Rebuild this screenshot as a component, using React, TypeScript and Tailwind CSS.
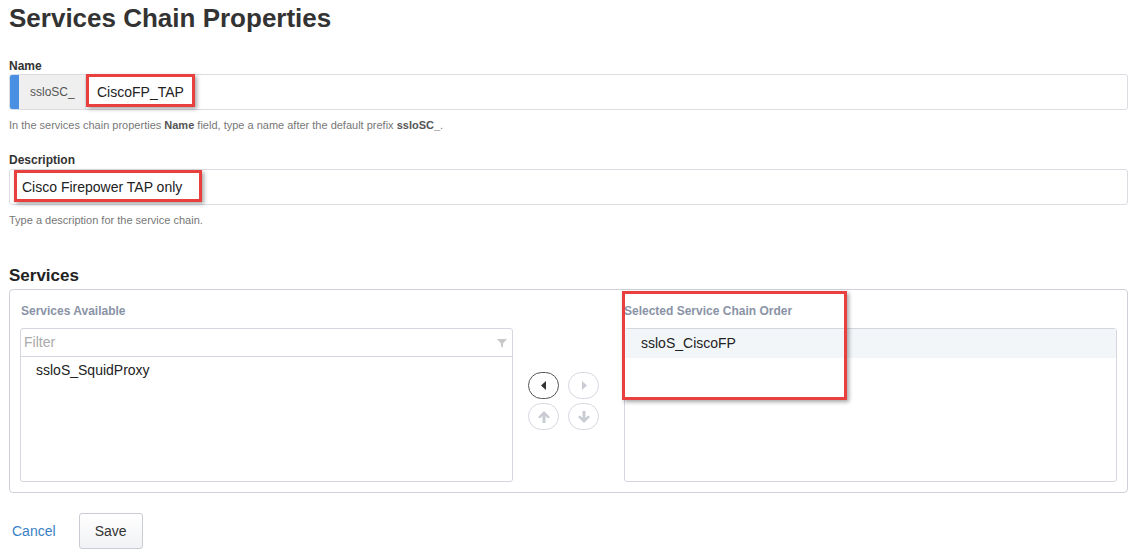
import React from 'react';

function CircleBtn({ active, children }: { active?: boolean; children: React.ReactNode }) {
  return (
    <button
      className={
        active
          ? 'w-[31px] h-[27px] rounded-full border border-[#555] flex items-center justify-center bg-white'
          : 'w-[31px] h-[27px] rounded-full border border-[#d4d7de] flex items-center justify-center bg-white'
      }
    >
      {children}
    </button>
  );
}

export default function App() {
  return (
    <div className="relative w-[1146px] h-[557px] bg-white text-[#333] font-['Liberation_Sans',Arial,sans-serif] px-[9px] pt-[3px]">
      <h1 className="text-[26px] font-bold leading-[30px] text-[#333]">Services Chain Properties</h1>

      <div className="mt-[26px] pr-[9px]">
        <label className="block text-[12px] font-bold leading-[14px] text-[#333]">Name</label>
        <div className="mt-[1px] flex h-[36px] border border-[#dcdde3] rounded-[3px] overflow-hidden">
          <div className="w-[9px] bg-[#4a90e2]" />
          <div className="w-[67px] bg-[#efefef] border-r border-[#dcdde3] flex items-center pl-[11px] text-[12px] text-[#555]">ssloSC_</div>
          <div className="flex-1 flex items-center pl-[11px] text-[14px] text-[#222]">CiscoFP_TAP</div>
        </div>
        <p className="mt-[9px] text-[11px] leading-[12px] text-[#777]">
          In the services chain properties <b className="text-[#555]">Name</b> field, type a name after the default prefix <b className="text-[#555]">ssloSC_</b>.
        </p>

        <label className="mt-[22px] block text-[12px] font-bold leading-[14px] text-[#333]">Description</label>
        <div className="mt-[2px] flex h-[36px] border border-[#dcdde3] rounded-[3px] items-center pl-[12px] text-[14px] text-[#222]">
          Cisco Firepower TAP only
        </div>
        <p className="mt-[9px] text-[11px] leading-[12px] text-[#777]">Type a description for the service chain.</p>

        <h2 className="mt-[40px] text-[17px] font-bold leading-[20px] text-[#222]">Services</h2>
        <div className="mt-[3px] h-[204px] border border-[#cfd1d8] rounded-[4px] px-[10px] pt-[14px] flex">
          <div className="w-[493px] flex flex-col">
            <div className="text-[12px] font-bold leading-[14px] text-[#8a93a6] pl-[1px]">Services Available</div>
            <div className="mt-[10px] h-[154px] border border-[#d4d7de] rounded-[3px] flex flex-col">
              <div className="h-[28px] border-b border-[#d4d7de] flex items-center justify-between px-[3px]">
                <span className="text-[14px] text-[#aaa]">Filter</span>
                <svg width="10" height="10" viewBox="0 0 10 10" className="mr-[2px]">
                  <path d="M0 1 H10 L6 5.5 V9.5 L4 8.5 V5.5 Z" fill="#c8c8c8" />
                </svg>
              </div>
              <div className="h-[26px] flex items-center pl-[15px] text-[14px] text-[#222]">ssloS_SquidProxy</div>
            </div>
          </div>

          <div className="w-[111px] flex flex-col pt-[68px] pl-[15px]">
            <div className="grid grid-cols-[31px_31px] gap-x-[9px] gap-y-[4px]">
              <CircleBtn active>
                <svg width="6" height="9" viewBox="0 0 6 9"><path d="M5 0 L0 4.5 L5 9 Z" fill="#333" /></svg>
              </CircleBtn>
              <CircleBtn>
                <svg width="6" height="9" viewBox="0 0 6 9"><path d="M1 0 L6 4.5 L1 9 Z" fill="#c9ccd3" /></svg>
              </CircleBtn>
              <CircleBtn>
                <svg width="14" height="14" viewBox="0 0 14 14"><path d="M7 1 L13 7 L11 8.5 L8.5 6 L8.5 13 L5.5 13 L5.5 6 L3 8.5 L1 7 Z" fill="#c9ccd3" /></svg>
              </CircleBtn>
              <CircleBtn>
                <svg width="14" height="14" viewBox="0 0 14 14"><path d="M7 13 L13 7 L11 5.5 L8.5 8 L8.5 1 L5.5 1 L5.5 8 L3 5.5 L1 7 Z" fill="#c9ccd3" /></svg>
              </CircleBtn>
            </div>
          </div>

          <div className="w-[493px] flex flex-col">
            <div className="text-[12px] font-bold leading-[14px] text-[#8a93a6]">Selected Service Chain Order</div>
            <div className="mt-[10px] h-[154px] border border-[#d4d7de] rounded-[3px] flex flex-col">
              <div className="h-[29px] bg-[#f3f6f9] flex items-center pl-[16px] text-[14px] text-[#222]">ssloS_CiscoFP</div>
            </div>
          </div>
        </div>

        <div className="mt-[20px] flex items-center gap-[23px] pl-[3px]">
          <a className="text-[14px] text-[#3a7fc4]">Cancel</a>
          <button className="w-[64px] h-[36px] border border-[#c9ccd3] rounded-[3px] bg-gradient-to-b from-white to-[#f1f2f5] text-[14px] text-[#333]">Save</button>
        </div>
      </div>

      <div className="absolute left-[86px] top-[74px] w-[109px] h-[33px] border-[3px] border-[#e8403f] shadow-[2px_2px_4px_rgba(0,0,0,0.35)]" />
      <div className="absolute left-[14px] top-[170px] w-[188px] h-[32px] border-[3px] border-[#e8403f] shadow-[2px_2px_4px_rgba(0,0,0,0.35)]" />
      <div className="absolute left-[622px] top-[291px] w-[225px] h-[109px] border-[3px] border-[#e8403f] shadow-[2px_2px_4px_rgba(0,0,0,0.35)]" />
    </div>
  );
}
